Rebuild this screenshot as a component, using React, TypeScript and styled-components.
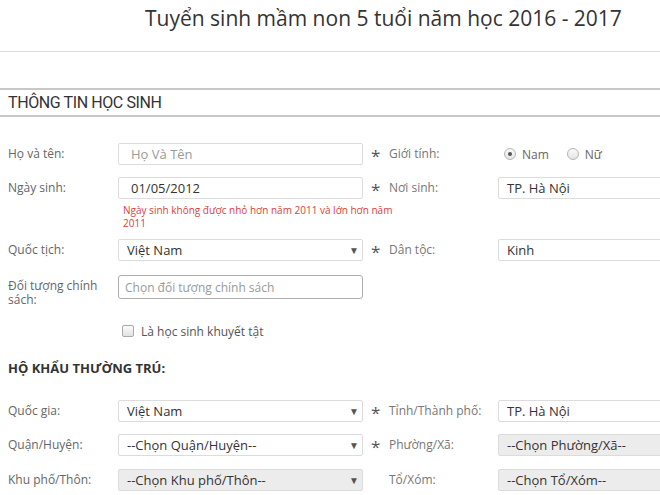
import React from "react";
import styled, { createGlobalStyle } from "styled-components";

const GlobalStyle = createGlobalStyle`
  html, body {
    margin: 0;
    padding: 0;
    background: #fff;
    overflow: hidden;
  }
  body {
    font-family: "Open Sans", "Liberation Sans", sans-serif;
    color: #333;
  }
`;

const Page = styled.div`
  width: 720px;
`;

const Header = styled.div`
  height: 52px;
  border-bottom: 1px solid #dcdcdc;
  box-sizing: border-box;
`;

const Title = styled.h1`
  margin: 0;
  padding: 3px 0 0 145px;
  font-size: 21px;
  font-weight: 400;
  line-height: 30px;
  color: #333;
  white-space: nowrap;
`;

const SectionBar = styled.div`
  margin-top: 36px;
  height: 29px;
  box-sizing: border-box;
  border-top: 2px solid #c8c8c8;
  border-bottom: 2px solid #c8c8c8;
  display: flex;
  align-items: center;
  padding-left: 8px;
  font-family: "Roboto", "Liberation Sans", sans-serif;
  font-size: 16px;
  letter-spacing: -0.4px;
  color: #333;
`;

const Body = styled.div`
  padding: 26px 0 0 8px;
`;

const Row = styled.div<{ $gap?: number }>`
  display: grid;
  grid-template-columns: 110px 245px 26px 109px 200px;
  align-items: start;
  margin-bottom: ${(p) => (p.$gap ?? 12)}px;
`;

const Label = styled.div`
  font-size: 12px;
  line-height: 14px;
  padding-top: 4px;
  color: #666;
  padding-right: 8px;
`;

const RightLabel = styled(Label)`
  color: #777;
`;

const Star = styled.div`
  font-size: 17px;
  line-height: 19px;
  height: 19px;
  padding: 3px 0 0 8px;
  color: #555;
`;

const Field = styled.div<{ $disabled?: boolean; $strong?: boolean }>`
  height: ${(p) => (p.$strong ? 24 : 22)}px;
  box-sizing: border-box;
  border: 1px solid ${(p) => (p.$strong ? "#adadad" : "#dcdcdc")};
  border-radius: ${(p) => (p.$strong ? 3 : 2)}px;
  background: ${(p) => (p.$disabled ? "#ececec" : "#fff")};
  display: flex;
  align-items: center;
  justify-content: space-between;
  padding: 0 3px 0 ${(p) => (p.$strong ? 6 : 8)}px;
  font-size: 13px;
  color: #333;
  white-space: nowrap;
  overflow: hidden;
`;

const Placeholder = styled.span<{ $small?: boolean }>`
  color: #9a9a9a;
  font-size: ${(p) => (p.$small ? 12 : 13)}px;
  padding-left: ${(p) => (p.$small ? 0 : 4)}px;
`;

const Value = styled.span<{ $indent?: number }>`
  padding-left: ${(p) => p.$indent ?? 0}px;
`;

const Arrow = styled.span`
  font-size: 10px;
  color: #555;
`;

const ErrorText = styled.div`
  margin: 5px 0 0 5px;
  width: 275px;
  font-size: 10px;
  line-height: 13px;
  color: #d9413a;
`;

const RadioGroup = styled.div`
  display: flex;
  align-items: center;
  height: 22px;
  padding-left: 6px;
  gap: 6px;
  font-size: 12px;
  color: #666;
`;

const Radio = styled.span<{ $checked?: boolean }>`
  width: 10px;
  height: 10px;
  border-radius: 50%;
  border: 1px solid #b5b5b5;
  background: linear-gradient(#fafafa, #e4e4e4);
  display: inline-flex;
  align-items: center;
  justify-content: center;
  &::after {
    content: "";
    width: 4px;
    height: 4px;
    border-radius: 50%;
    background: ${(p) => (p.$checked ? "#555" : "transparent")};
  }
`;

const RadioText = styled.span`
  margin-right: 12px;
`;

const CheckRow = styled.div`
  display: flex;
  align-items: center;
  gap: 7px;
  margin: 13px 0 0 114px;
  font-size: 12px;
  color: #555;
  height: 22px;
`;

const Checkbox = styled.span`
  width: 10px;
  height: 10px;
  border: 1px solid #aaa;
  border-radius: 2px;
  background: linear-gradient(#fbfbfb, #e2e2e2);
`;

const SubHeading = styled.div`
  margin: 18px 0 24px;
  font-size: 13px;
  font-weight: 700;
  color: #333;
  line-height: 16px;
`;

function Select({ children, disabled }: { children: React.ReactNode; disabled?: boolean }) {
  return (
    <Field $disabled={disabled}>
      <span>{children}</span>
      <Arrow>▼</Arrow>
    </Field>
  );
}

export default function App() {
  return (
    <Page>
      <GlobalStyle />
      <Header>
        <Title>Tuyển sinh mầm non 5 tuổi năm học 2016 - 2017</Title>
      </Header>

      <SectionBar>THÔNG TIN HỌC SINH</SectionBar>

      <Body>
        <Row>
          <Label>Họ và tên:</Label>
          <Field>
            <Placeholder>Họ Và Tên</Placeholder>
          </Field>
          <Star>*</Star>
          <RightLabel>Giới tính:</RightLabel>
          <RadioGroup>
            <Radio $checked />
            <RadioText>Nam</RadioText>
            <Radio />
            <RadioText>Nữ</RadioText>
          </RadioGroup>
        </Row>

        <Row $gap={9}>
          <Label>Ngày sinh:</Label>
          <div>
            <Field>
              <Value $indent={4}>01/05/2012</Value>
            </Field>
            <ErrorText>Ngày sinh không được nhỏ hơn năm 2011 và lớn hơn năm 2011</ErrorText>
          </div>
          <Star>*</Star>
          <RightLabel>Nơi sinh:</RightLabel>
          <Field>
            <Value>TP. Hà Nội</Value>
          </Field>
        </Row>

        <Row $gap={14}>
          <Label>Quốc tịch:</Label>
          <Select>Việt Nam</Select>
          <Star>*</Star>
          <RightLabel>Dân tộc:</RightLabel>
          <Field>
            <Value>Kinh</Value>
          </Field>
        </Row>

        <Row $gap={0}>
          <Label>Đối tượng chính sách:</Label>
          <Field $strong>
            <Placeholder $small>Chọn đối tượng chính sách</Placeholder>
          </Field>
        </Row>

        <CheckRow>
          <Checkbox />
          <span>Là học sinh khuyết tật</span>
        </CheckRow>

        <SubHeading>HỘ KHẨU THƯỜNG TRÚ:</SubHeading>

        <Row>
          <Label>Quốc gia:</Label>
          <Select>Việt Nam</Select>
          <Star>*</Star>
          <RightLabel>Tỉnh/Thành phố:</RightLabel>
          <Field>
            <Value>TP. Hà Nội</Value>
          </Field>
        </Row>

        <Row $gap={13}>
          <Label>Quận/Huyện:</Label>
          <Select>--Chọn Quận/Huyện--</Select>
          <Star>*</Star>
          <RightLabel>Phường/Xã:</RightLabel>
          <Field $disabled>
            <Value>--Chọn Phường/Xã--</Value>
          </Field>
        </Row>

        <Row>
          <Label>Khu phố/Thôn:</Label>
          <Select disabled>--Chọn Khu phố/Thôn--</Select>
          <div />
          <RightLabel>Tổ/Xóm:</RightLabel>
          <Field $disabled>
            <Value>--Chọn Tổ/Xóm--</Value>
          </Field>
        </Row>
      </Body>
    </Page>
  );
}
